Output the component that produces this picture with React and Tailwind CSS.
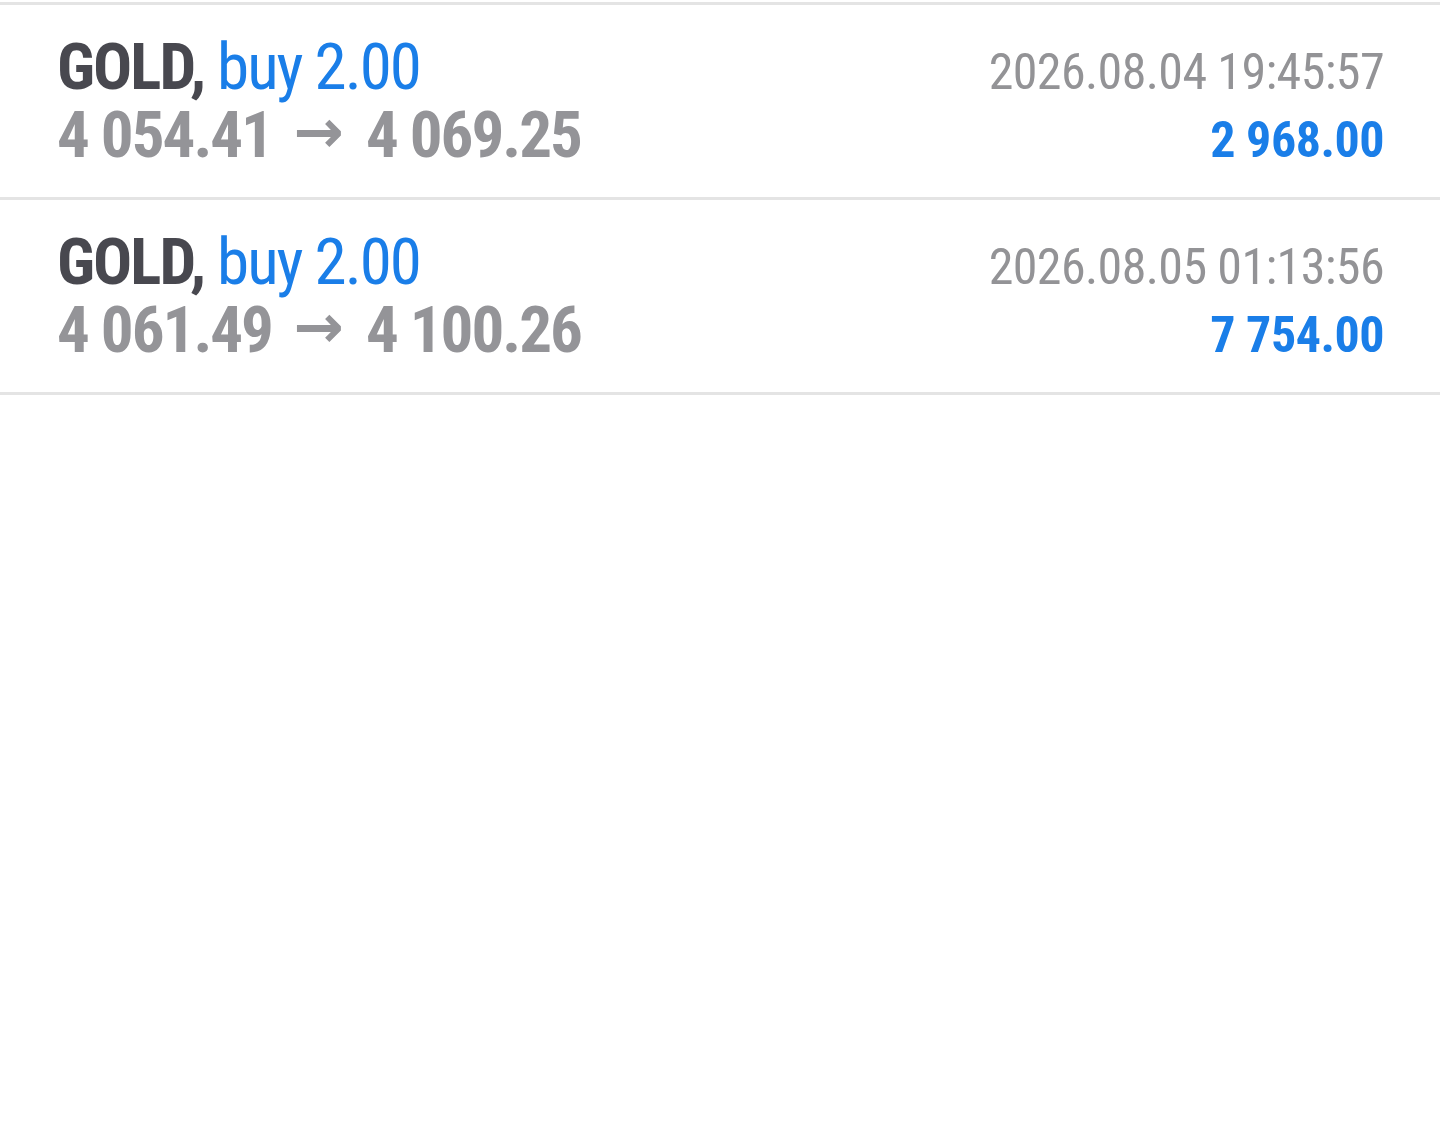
import React from "react";

const rows = [
  { sym: "GOLD", side: "buy 2.00", from: "4 054.41", to: "4 069.25", time: "2026.08.04 19:45:57", profit: "2 968.00" },
  { sym: "GOLD", side: "buy 2.00", from: "4 061.49", to: "4 100.26", time: "2026.08.05 01:13:56", profit: "7 754.00" },
];

export default function App() {
  return (
    <div className="w-[1440px] h-[1148px] bg-white pt-[2px] [font-family:Roboto,'Liberation_Sans',sans-serif] [font-stretch:75%]">
      <div className="border-t-[3px] border-[#e4e4e4]">
        {rows.map((r, i) => (
          <div key={i} className="border-b-[3px] border-[#e4e4e4] pl-[57px] pr-[56px] pt-[28px] pb-[28px]">
            <div className="flex justify-between items-baseline h-[68px] leading-[68px]">
              <div className="text-[65px] tracking-[-2px] whitespace-nowrap">
                <span className="font-bold text-[#48484f]">{r.sym},</span>{" "}
                <span className="text-[#1a7ee8]">{r.side}</span>
              </div>
              <div className="text-[50px] tracking-[-0.6px] text-[#939396] whitespace-nowrap">{r.time}</div>
            </div>
            <div className="flex justify-between items-baseline h-[68px] leading-[68px]">
              <div className="text-[65px] tracking-[-2px] font-bold text-[#949498] whitespace-nowrap">
                {r.from}{" "}
                <span className="inline-block w-[68px] text-center text-[60px] leading-[0px] tracking-normal align-[5px] [font-family:'DejaVu_Sans',sans-serif] [font-stretch:100%]">
                  →
                </span>{" "}
                {r.to}
              </div>
              <div className="text-[50px] tracking-[-0.5px] font-bold text-[#1a7ee8] whitespace-nowrap">{r.profit}</div>
            </div>
          </div>
        ))}
      </div>
    </div>
  );
}
